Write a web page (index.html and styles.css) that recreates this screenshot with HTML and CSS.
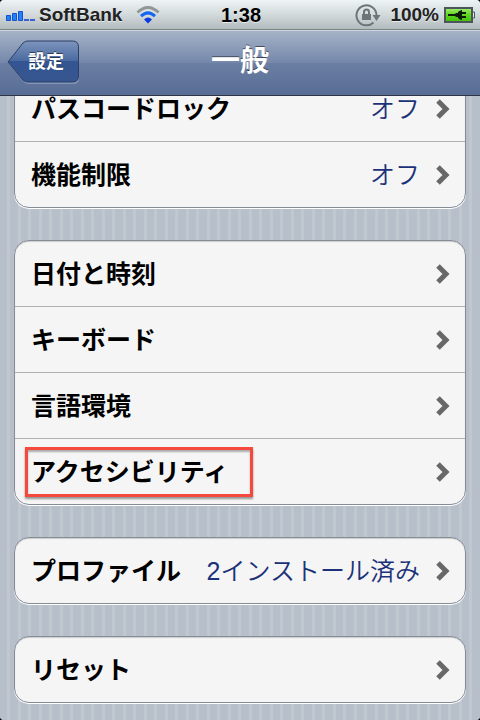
FILE: index.html
```html
<!DOCTYPE html>
<html lang="ja">
<head>
    <meta charset="UTF-8">
    <meta name="viewport" content="width=device-width, initial-scale=1">
    <title>一般</title>

    <link rel="stylesheet" href="styles.css">
</head>

<body>
<div class="screen">
    <div class="status-bar">
        <div class="status-left">
            <svg class="signal" width="30" height="12" viewBox="0 0 30 12">
                <g fill="#1d84f5" stroke="#1b4fd0" stroke-width="1">
                    <path d="M.5 6.500h4v5h-4zM6.500 4.500h4v7h-4zM12.500 2.500h4v9h-4z"/>
                </g>
                <path d="M18 10h5v2h-5zM24 10h5v2h-5z" fill="#3b5fd6"/>
            </svg>
            <span class="carrier">SoftBank</span>
            <svg class="wifi" width="24" height="18" viewBox="0 0 24 18" fill="none">
                <path d="M1.500 6.500Q12-3.500 22.500 6.500" stroke="#929898" stroke-width="3"/>
                <path d="M5 10.200Q12 3.600 19 10.200" stroke="#1467ee" stroke-width="3"/>
                <path d="M8 13.500Q12 9.500 16 13.500L12 17.500z" fill="#0b3be0"/>
            </svg>
        </div>
        <span class="clock">1:38</span>
        <div class="status-right">
            <svg class="lock" width="26" height="24" viewBox="0 0 26 24" fill="none">
                <path d="M18.500 19.500A10 10 0 1 1 21.500 12" stroke="#6c7577" stroke-width="2"/>
                <path d="M17.500 12h8l-4 6z" fill="#6c7577"/>
                <path d="M9 11V9a2.500 2.500 0 0 1 5 0V11" stroke="#6c7577" stroke-width="2"/>
                <path d="M7 11h9v6H7z" fill="#6c7577"/>
            </svg>
            <span class="percent">100%</span>
            <svg class="battery" width="32" height="16" viewBox="0 0 32 16">
                <defs>
                    <linearGradient id="charge" x1="0" y1="0" x2="0" y2="1">
                        <stop offset="0" stop-color="#a9ec74"/>
                        <stop offset=".45" stop-color="#62d820"/>
                        <stop offset="1" stop-color="#43bd08"/>
                    </linearGradient>
                </defs>
                <rect x="1" y="1" width="27" height="14" fill="url(#charge)" stroke="#4a555c" stroke-width="2"/>
                <path d="M29 5h1.500v6H29" fill="#e4e9ea" stroke="#4a555c"/>
                <path d="M4 7h7l1-1h2V5c1-1 3-2 4-2v2h4v2h-4v2h4v2h-4v2c-1 0-3-1-4-2v-1h-2l-1-1H4z" fill="#0c1d08"/>
            </svg>
        </div>
    </div>

    <header class="nav-bar">
        <button class="back" type="button">
            <svg class="back-shape" width="72" height="44" viewBox="0 0 72 44">
                <defs>
                    <linearGradient id="back-fill" x1="0" y1="0" x2="0" y2="1">
                        <stop offset="0" stop-color="#7e95bd"/>
                        <stop offset=".5" stop-color="#48699f"/>
                        <stop offset=".5" stop-color="#345592"/>
                        <stop offset="1" stop-color="#36568f"/>
                    </linearGradient>
                </defs>
                <path d="M1 23L16 4Q18 2 21 2H66Q72 2 72 8V38Q72 44 66 44H21Q18 44 16 41z" fill="#8397b8"/>
                <path d="M1 22L16 3Q18 1 21 1H65.500Q71.500 1 71.500 7V36Q71.500 42 65.500 42H21Q18 42 16 40z" fill="url(#back-fill)" stroke="#2d3f66"/>
            </svg>
            <span class="back-label">設定</span>
        </button>
        <h1 class="title">一般</h1>
    </header>

    <main class="content">
        <div class="groups">
            <div class="group">
                <a class="row" href="#">
                    <span class="label">パスコードロック</span>
                    <span class="value">オフ</span>
                    <svg class="chevron" width="14" height="20" viewBox="0 0 14 20"><path d="M2 2l8 8-8 8"/></svg>
                </a>
                <a class="row" href="#">
                    <span class="label">機能制限</span>
                    <span class="value">オフ</span>
                    <svg class="chevron" width="14" height="20" viewBox="0 0 14 20"><path d="M2 2l8 8-8 8"/></svg>
                </a>
            </div>

            <div class="group">
                <a class="row" href="#">
                    <span class="label">日付と時刻</span>
                    <svg class="chevron" width="14" height="20" viewBox="0 0 14 20"><path d="M2 2l8 8-8 8"/></svg>
                </a>
                <a class="row" href="#">
                    <span class="label">キーボード</span>
                    <svg class="chevron" width="14" height="20" viewBox="0 0 14 20"><path d="M2 2l8 8-8 8"/></svg>
                </a>
                <a class="row" href="#">
                    <span class="label">言語環境</span>
                    <svg class="chevron" width="14" height="20" viewBox="0 0 14 20"><path d="M2 2l8 8-8 8"/></svg>
                </a>
                <a class="row marked" href="#">
                    <span class="label">アクセシビリティ</span>
                    <svg class="chevron" width="14" height="20" viewBox="0 0 14 20"><path d="M2 2l8 8-8 8"/></svg>
                </a>
            </div>

            <div class="group">
                <a class="row" href="#">
                    <span class="label">プロファイル</span>
                    <span class="value">2インストール済み</span>
                    <svg class="chevron" width="14" height="20" viewBox="0 0 14 20"><path d="M2 2l8 8-8 8"/></svg>
                </a>
            </div>

            <div class="group">
                <a class="row" href="#">
                    <span class="label">リセット</span>
                    <svg class="chevron" width="14" height="20" viewBox="0 0 14 20"><path d="M2 2l8 8-8 8"/></svg>
                </a>
            </div>
        </div>
    </main>
</div>
</body>
</html>
```

FILE: styles.css
```css
* {
    box-sizing: border-box;
}

body {
    margin: 0;
    background: #000;
    font-family: "Liberation Sans", "Noto Sans CJK JP", sans-serif;
}

.screen {
    display: flex;
    flex-direction: column;
    height: 100vh;
    overflow: hidden;
    border-radius: 4px;
    background: #b7bfcb;
}

/* status bar */
.status-bar {
    display: grid;
    grid-template-columns: 1fr auto 1fr;
    align-items: center;
    flex: none;
    height: 30px;
    padding: 0 4px 0 6px;
    border-bottom: 1px solid #7c8488;
    background: linear-gradient(#eef4f5, #d3dadc 50%, #b2bbbe);
    color: #222;
    font-size: 19px;
    font-weight: 700;
    line-height: 28px;
    text-shadow: 0 1px 0 rgba(255, 255, 255, 0.6);
}
.status-left,
.status-right {
    display: flex;
    align-items: center;
}
.status-right {
    justify-content: flex-end;
}
.carrier {
    margin: 0 14px 0 3px;
}
.clock {
    color: #000;
    font-size: 20px;
}
.percent {
    margin: 0 5px 0 9px;
}

/* navigation bar */
.nav-bar {
    display: grid;
    grid-template-columns: 1fr auto 1fr;
    align-items: center;
    flex: none;
    height: 66px;
    padding: 0 7px 2px;
    border-top: 1px solid #cdd5df;
    border-bottom: 1px solid #2d3642;
    background: linear-gradient(#a6b3c8, #7487aa 50%, #6b7fa4 50%, #586d95);
}
.back {
    display: grid;
    justify-self: start;
    align-items: center;
    padding: 0;
    border: 0;
    background: none;
    color: #fff;
    font-family: inherit;
    cursor: pointer;
}
.back-shape,
.back-label {
    grid-area: 1 / 1;
}
.back-label {
    padding-left: 6px;
    font-size: 18px;
    font-weight: 700;
    line-height: 24px;
    text-shadow: 0 -1px 0 rgba(0, 0, 0, 0.5);
}
.title {
    margin: 0;
    padding-bottom: 2px;
    color: #fff;
    font-size: 29px;
    font-weight: 700;
    line-height: 40px;
    text-shadow: 0 -1px 0 rgba(0, 0, 0, 0.5);
}

/* settings list */
.content {
    flex: 1;
    min-height: 0;
    overflow: hidden;
    background: repeating-linear-gradient(90deg,
        #b7bfcb 0, #b7bfcb 7px,
        #bfc8cf 7px, #bfc8cf 10px,
        #b7bfcb 10px, #b7bfcb 18px,
        #bfc8cf 18px, #bfc8cf 21px);
}
/* scrolled partly under the navigation bar */
.groups {
    display: flex;
    flex-direction: column;
    gap: 32px;
    margin-top: -21px;
    padding: 0 14px 16px;
}
.group {
    border: 1px solid #858c98;
    border-radius: 15px;
    background: #f5f5f5;
    box-shadow: 0 1px 0 #fff, inset 0 1px 1px #ccc;
}
.row {
    display: flex;
    align-items: center;
    height: 66px;
    padding: 0 15px 0 16px;
    border-bottom: 1px solid #b1b1b1;
    color: #000;
    text-decoration: none;
}
.row:last-child {
    height: 65px;
    border-bottom: 0;
}
.label,
.value {
    font-size: 25px;
    line-height: 26px;
    white-space: nowrap;
}
.label {
    margin-right: auto;
    font-weight: 700;
}
.value {
    margin-right: 16px;
    color: #1c3278;
    font-weight: 350;
}
.chevron {
    flex: none;
    fill: none;
    stroke: #686868;
    stroke-width: 5;
}

.marked .label {
    margin-left: -6px;
    padding: 9px 22px 9px 3px;
    border: 3px solid #f5493d;
    box-shadow: 0 2px 2px rgba(0, 0, 0, 0.4), inset 0 2px 2px rgba(0, 0, 0, 0.3);
}
```
